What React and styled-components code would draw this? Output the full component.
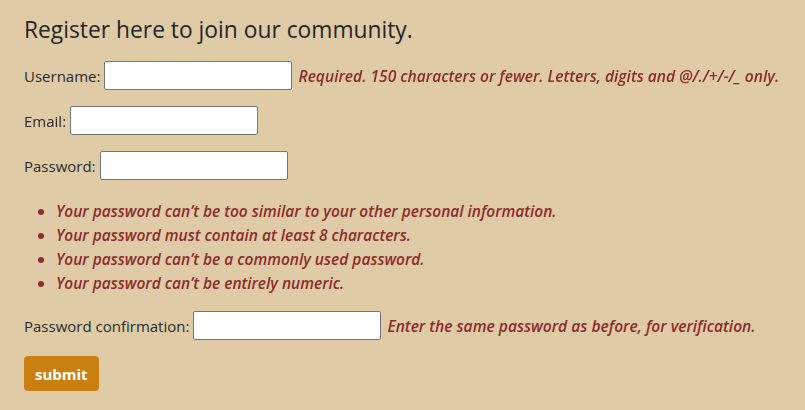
import React from "react";
import styled, { createGlobalStyle } from "styled-components";

const GlobalStyle = createGlobalStyle`
  html, body {
    margin: 0;
    padding: 0;
    background-color: #e0cba7;
  }
  body {
    font-family: "Open Sans", "Liberation Sans", sans-serif;
    color: #2b2b2b;
  }
`;

const Page = styled.div`
  padding: 14px 24px 18px;
  min-height: 410px;
  box-sizing: border-box;
`;

const Title = styled.h2`
  font-size: 22.8px;
  font-weight: 400;
  margin: 0 0 16px;
  color: #262626;
`;

const Form = styled.form`
  display: flex;
  flex-direction: column;
  gap: 16px;
`;

const Field = styled.div`
  display: flex;
  align-items: center;
  font-size: 15px;
`;

const Label = styled.label`
  margin-right: 4px;
`;

const Input = styled.input`
  width: 188px;
  height: 29px;
  box-sizing: border-box;
  border: 1px solid #767676;
  border-radius: 2px;
  background: #fff;
  padding: 0 4px;
  font-size: 14px;
  outline: none;
`;

const HelpText = styled.span`
  margin-left: 6px;
  color: #8e2b2b;
  font-weight: 600;
  font-style: italic;
  font-size: 15.6px;
`;

const Rules = styled.ul`
  margin: 3px 0 0;
  padding-left: 32px;
  list-style: disc;
  color: #8e2b2b;
  font-weight: 600;
  font-style: italic;
  font-size: 15.5px;
`;

const Rule = styled.li`
  line-height: 24px;
`;

const Submit = styled.button`
  align-self: flex-start;
  background-color: #c98010;
  color: #fff;
  border: none;
  border-radius: 4px;
  padding: 0 11px;
  height: 35px;
  font-family: inherit;
  font-size: 15px;
  font-weight: 700;
  cursor: pointer;
`;

const rules = [
  "Your password can\u2019t be too similar to your other personal information.",
  "Your password must contain at least 8 characters.",
  "Your password can\u2019t be a commonly used password.",
  "Your password can\u2019t be entirely numeric.",
];

export default function App() {
  return (
    <>
      <GlobalStyle />
      <Page>
        <Title>Register here to join our community.</Title>
        <Form onSubmit={(e) => e.preventDefault()}>
          <Field>
            <Label htmlFor="username">Username:</Label>
            <Input id="username" type="text" autoFocus />
            <HelpText>Required. 150 characters or fewer. Letters, digits and @/./+/-/_ only.</HelpText>
          </Field>
          <Field>
            <Label htmlFor="email">Email:</Label>
            <Input id="email" type="email" />
          </Field>
          <Field>
            <Label htmlFor="password1">Password:</Label>
            <Input id="password1" type="password" />
          </Field>
          <Rules>
            {rules.map((r) => (
              <Rule key={r}>{r}</Rule>
            ))}
          </Rules>
          <Field>
            <Label htmlFor="password2">Password confirmation:</Label>
            <Input id="password2" type="password" />
            <HelpText>Enter the same password as before, for verification.</HelpText>
          </Field>
          <Submit type="submit">submit</Submit>
        </Form>
      </Page>
    </>
  );
}
